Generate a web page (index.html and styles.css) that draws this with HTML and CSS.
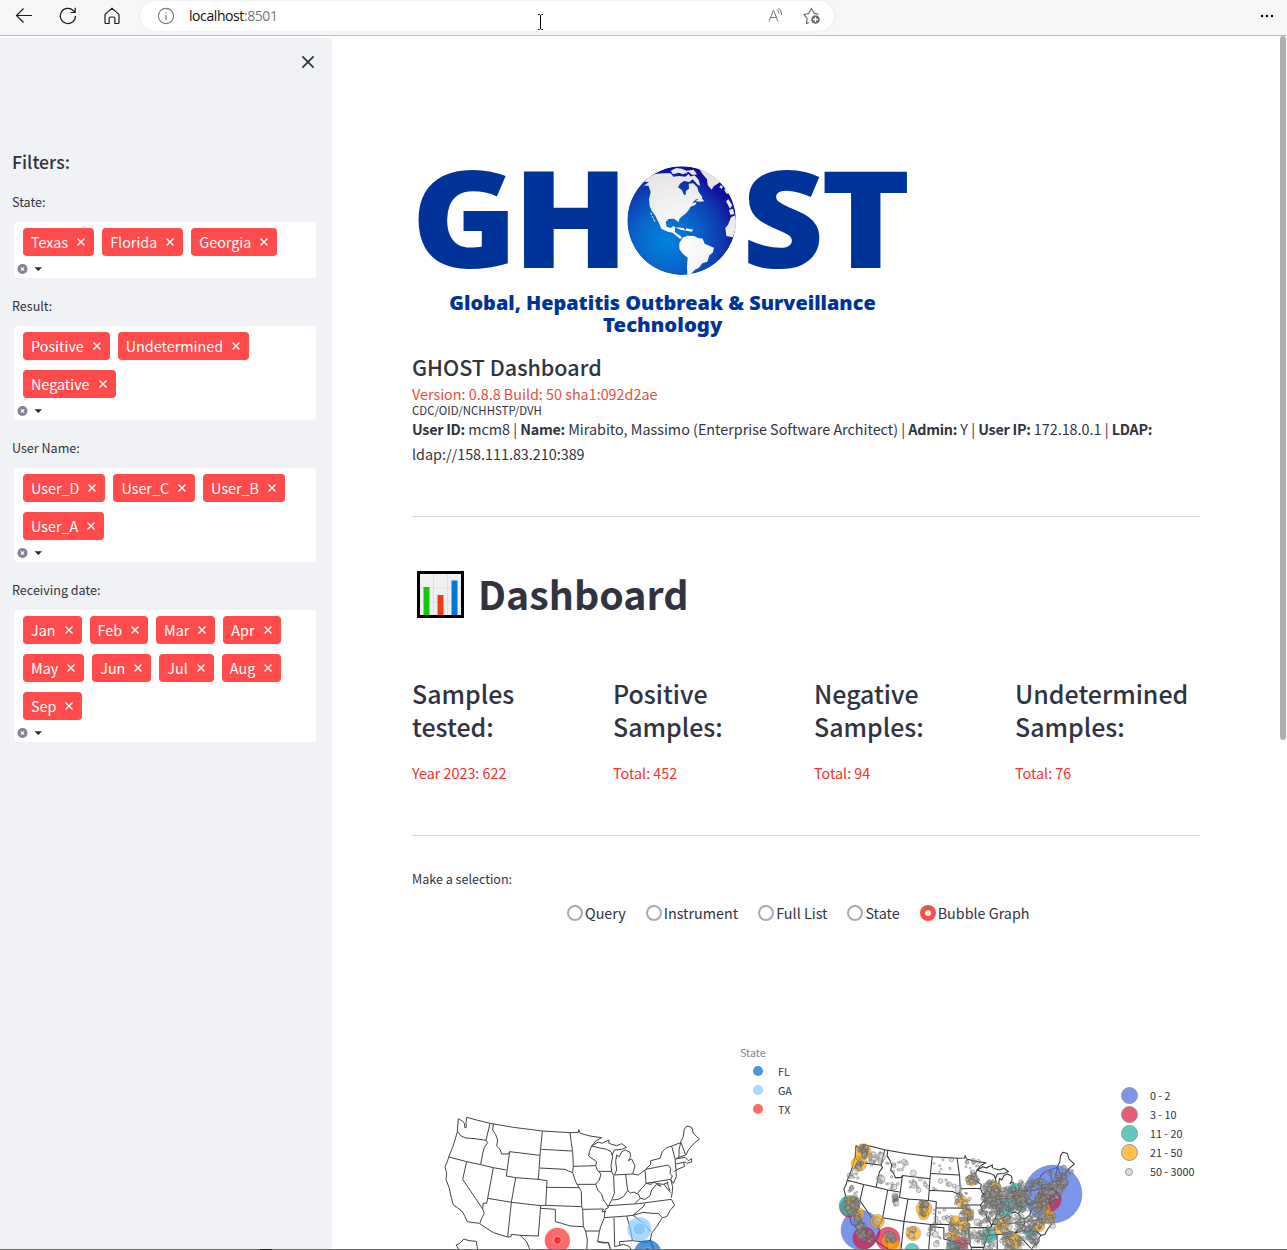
FILE: index.html
```html
<!DOCTYPE html>
<html lang="en">
<head>
<meta charset="utf-8">
<title>GHOST Dashboard</title>
<link rel="stylesheet" href="styles.css">
</head>
<body>
<header class="browser">
  <svg class="nav-icon back" viewBox="0 0 18 18"><path d="M17 8.500H1.500M8.500 1.500l-7 7 7 7"/></svg>
  <svg class="nav-icon reload" viewBox="0 0 18 18"><path d="M16.500 9a7.600 7.600 0 1 1-2.300-5.500L16 5.200M16.200 .8v4.700h-4.700"/></svg>
  <svg class="nav-icon home" viewBox="0 0 18 18"><path d="M2 7.400 9 1.200l7 6.200v8.200a.9.900 0 0 1-.9.900h-3.200v-5a1.500 1.500 0 0 0-1.500-1.500H7.600a1.500 1.500 0 0 0-1.500 1.500v5H2.900a.9.900 0 0 1-.9-.9z"/></svg>
  <div class="address">
    <svg class="info" viewBox="0 0 18 18"><circle cx="9" cy="9" r="7.600"/><path d="M9 8v5M9 5v1.200"/></svg>
    <span class="url">localhost<span class="port">:8501</span></span>
    <svg class="read" viewBox="0 0 16 16"><path d="M1 14.500 5.500 3 10 14.500M2.500 10.500h6M9 2.500q2 1.500 2 4M10.500 1q3.500 2.500 3 7"/></svg>
    <svg class="star" viewBox="0 0 18 18"><path d="M6 15.500l-2.500 1 .6-5L1 7.500l4.600-1L8.500 1.500l2.600 4.800 4.700.9"/><circle class="disc" cx="12.500" cy="12.500" r="4.300"/><path class="plus" d="M12.500 10v5M10 12.500h5"/></svg>
    <svg class="cursor" viewBox="0 0 7 16"><path d="M1 .5h1.500l1 1 1-1H6M3.500 1v14M1 15.500h1.500l1-1 1 1H6"/></svg>
  </div>
  <svg class="more" viewBox="0 0 14 4"><circle cx="2" cy="2" r="1.200"/><circle cx="7" cy="2" r="1.200"/><circle cx="12" cy="2" r="1.200"/></svg>
</header>

<svg class="defs" aria-hidden="true">
  <symbol id="x" viewBox="0 0 10 10"><path d="M1.500 1.500l7 7M8.500 1.500l-7 7"/></symbol>
  <symbol id="controls" viewBox="0 0 30 12"><circle cx="5.500" cy="6" r="5" fill="#808495"/><path d="M3.900 4.400l3.200 3.200M7.100 4.400 3.900 7.600" stroke="#fff" stroke-width="1.200"/><path d="M17.500 4.200h7.500L21.250 8z" fill="#262730"/></symbol>
</svg>

<div class="page">
  <aside class="sidebar">
    <svg class="close"><use href="#x"/></svg>
    <h2 class="filters-title">Filters:</h2>
    <section class="filter"><p class="label">State:</p>
      <div class="select"><div class="tags"><span class="tag">Texas<svg><use href="#x"/></svg></span><span class="tag">Florida<svg><use href="#x"/></svg></span><span class="tag">Georgia<svg><use href="#x"/></svg></span></div><svg class="controls"><use href="#controls"/></svg></div></section>
    <section class="filter"><p class="label">Result:</p>
      <div class="select"><div class="tags"><span class="tag">Positive<svg><use href="#x"/></svg></span><span class="tag">Undetermined<svg><use href="#x"/></svg></span><span class="tag">Negative<svg><use href="#x"/></svg></span></div><svg class="controls"><use href="#controls"/></svg></div></section>
    <section class="filter"><p class="label">User Name:</p>
      <div class="select"><div class="tags"><span class="tag">User_D<svg><use href="#x"/></svg></span><span class="tag">User_C<svg><use href="#x"/></svg></span><span class="tag">User_B<svg><use href="#x"/></svg></span><span class="tag">User_A<svg><use href="#x"/></svg></span></div><svg class="controls"><use href="#controls"/></svg></div></section>
    <section class="filter"><p class="label">Receiving date:</p>
      <div class="select"><div class="tags"><span class="tag">Jan<svg><use href="#x"/></svg></span><span class="tag">Feb<svg><use href="#x"/></svg></span><span class="tag">Mar<svg><use href="#x"/></svg></span><span class="tag">Apr<svg><use href="#x"/></svg></span><span class="tag">May<svg><use href="#x"/></svg></span><span class="tag">Jun<svg><use href="#x"/></svg></span><span class="tag">Jul<svg><use href="#x"/></svg></span><span class="tag">Aug<svg><use href="#x"/></svg></span><span class="tag">Sep<svg><use href="#x"/></svg></span></div><svg class="controls"><use href="#controls"/></svg></div></section>
  </aside>

  <main class="main">
    <svg class="logo" viewBox="36 0 1500 600">
      <defs><radialGradient id="sea" gradientUnits="userSpaceOnUse" cx="800" cy="270" r="215"><stop offset="0" stop-color="#0084dc"/><stop offset=".45" stop-color="#0a62c8"/><stop offset=".8" stop-color="#0d36ac"/><stop offset="1" stop-color="#10109c"/></radialGradient>
      <radialGradient id="land" gradientUnits="userSpaceOnUse" cx="840" cy="280" r="230"><stop offset="0" stop-color="#fff"/><stop offset="1" stop-color="#e4e4e6"/></radialGradient>
      <clipPath id="disc"><circle cx="845" cy="212" r="163"/></clipPath></defs>
      <g class="wordmark"><text x="34" y="354" textLength="319" lengthAdjust="spacingAndGlyphs">G</text><text x="337" y="354" textLength="351" lengthAdjust="spacingAndGlyphs">H</text><text x="1026" y="354" textLength="246" lengthAdjust="spacingAndGlyphs">S</text><text x="1262" y="354" textLength="270" lengthAdjust="spacingAndGlyphs">T</text></g>
      <g clip-path="url(#disc)">
        <circle cx="845" cy="212" r="163" fill="url(#sea)"/>
        <path fill="url(#land)" d="M712 128 735 104 747 96 733 95 745 82 765 72 790 70 812 70 820 80 838 78 856 80 866 72 878 88 868 96 852 93 840 101 834 112 846 121 852 135 857 134 858 123 867 116 866 101 880 100 892 112 896 126 907 141 904 150 888 148 877 159 890 157 886 165 872 170 866 180 858 190 846 199 838 207 836 216 822 206 806 207 797 216 800 230 812 234 820 228 826 232 824 246 834 252 846 262 841 267 829 258 818 248 803 245 784 236 777 220 766 197 756 184 749 168 747 148 752 126 746 108 733 106z"/>
        <path fill="url(#land)" d="M838 279 848 263 862 257 882 258 894 264 908 266 914 281 942 293 938 308 928 316 922 335 907 340 897 353 884 360 873 372 862 376 861 349 863 323 849 312 838 297z"/>
        <path fill="url(#land)" d="M900 60 920 55 944 74 961 96 953 101 941 109 935 119 923 105 921 88 908 73z"/>
        <path fill="url(#land)" d="M812 62l17-8 17 2 13 6 22-3 10 14-14 2-12-10-16 8-12-5-18 5zM870 80l14-4 12 14 5 18-10-5-10-13zM962 105l7 5-4 7-7-5zM976 113l10 14-5 6-8-12zM985 148l12 18-7 10-12-22zM987 180l12-4 4 17-12 1zM993 202l13-6 4 28-11 38-20-4-3-24 8-10z"/>
        <path fill="url(#land)" d="M826 232l24 2 8 8-17-3zM858 235l22 4-5 6-17-3zM885 153l20-8 8 9-13 1z"/>
        <path d="M752 188l14 30M826 63l35 7M862 76l34 24" stroke="#eee" stroke-width="3" fill="none" stroke-dasharray="8 3"/>
      </g>
      <g class="tagline"><text x="148" y="480" textLength="1279" lengthAdjust="spacingAndGlyphs">Global, Hepatitis Outbreak &amp; Surveillance</text><text x="609" y="547" textLength="358" lengthAdjust="spacingAndGlyphs">Technology</text></g>
    </svg>
    <h2 class="app-name">GHOST Dashboard</h2>
    <p class="version">Version: 0.8.8 Build: 50 sha1:092d2ae</p>
    <p class="org">CDC/OID/NCHHSTP/DVH</p>
    <p class="user"><b>User ID:</b> mcm8 | <b>Name:</b> Mirabito, Massimo (Enterprise Software Architect) | <b>Admin:</b> Y | <b>User IP:</b> 172.18.0.1 | <b>LDAP:</b><br>ldap://158.111.83.210:389</p>
    <hr class="rule">
    <h1 class="title"><svg viewBox="0 0 47 47"><path d="M1.500 1.500h44v44h-44z" fill="#f0f0f1" stroke="#000" stroke-width="3"/><path d="M16.500 3v41M30.500 3v41M3 17h41M3 31h41" stroke="#dedee0"/><path d="M6.500 16h6v28h-6z" fill="#16c60c"/><path d="M20.500 24h6v20h-6z" fill="#f03a17"/><path d="M34.500 9.500h6V44h-6z" fill="#0078d7"/></svg><span>Dashboard</span></h1>
    <div class="metrics">
      <div><h3>Samples<br>tested:</h3><p>Year 2023: 622</p></div>
      <div><h3>Positive<br>Samples:</h3><p>Total: 452</p></div>
      <div><h3>Negative<br>Samples:</h3><p>Total: 94</p></div>
      <div><h3>Undetermined<br>Samples:</h3><p>Total: 76</p></div>
    </div>
    <hr class="rule second">
    <p class="label choose">Make a selection:</p>
    <div class="radios"><span><i></i>Query</span><span><i></i>Instrument</span><span><i></i>Full List</span><span><i></i>State</span><span><i class="on"></i>Bubble Graph</span></div>
    <div class="charts">
      <svg class="map-left" viewBox="-54 0 984 630">
        <defs><g id="usa">
          <path d="M82 275 85 236 98 244 103 250 105 264 109 262 108 248 110 232 140 240 180 250 250 262 337 273 420 278 445 277 446 269 451 280 480 288 515 293 497 303 485 318M82 275 75 300 68 322 57 348 52 365 45 380 50 400 48 418 58 445 62 465 70 495 82 503 97 515 105 530 112 545 147 550M83 275 93 288 108 294 135 296 168 301M180 250 168 301 173 308 163 322 158 340 152 374M190 252 188 270 197 284 203 300 200 318 210 328 215 342 235 342 239 335 330 346"/>
          <path d="M57 351 110 365 152 374 190 383 229 390M110 365 98 418 158 507M190 383 173 475 170 490 160 489 158 507 163 520 155 535 149 551 190 578 233 591 243 590 244 583 270 586 325 588 332 497M239 335 229 408 257 413 325 418 351 422 347 496M257 413 244 487 233 590M173 475 245 487 332 497 347 496 454 500M337 273 330 346 325 418M334 328 426 333M329 384 405 388 415 393 428 398M350 442 448 443M420 278 424 310 428 335 430 378 428 398 437 425 441 433 448 443 454 455 455 500 458 508 460 560 467 573 472 600 470 630"/>
          <path d="M430 379 497 377 500 365 476 348 478 335 485 318 510 324 530 328 543 335 548 350 543 375 545 394 506 394M497 377 503 392 513 402 508 420 497 432 503 450 515 462 520 480 530 492 535 503 525 508 523 533 512 560 508 575 503 605 535 608 541 625M441 433 497 433M487 317 505 306 517 310 525 305 537 300 536 309 545 313 560 317 575 311 590 322 575 328 553 330 546 347M553 405 560 390 557 365 560 345 568 350 575 335 586 330 600 337 602 350 595 362 605 357 615 378 608 402 553 405M545 394 551 407 553 460 545 480 535 500M587 404 593 452M548 480 565 478 580 470 593 452 602 459 612 456 622 462 630 450 640 440 648 430 645 390 625 405 608 402M645 390 647 388 662 373 662 362 690 355 697 335 710 323 725 318 735 355 738 390 733 395M647 388 715 375 722 385 720 400 727 408 722 418 648 430M725 318 752 308 747 330 747 352 737 357 765 352 775 362 785 356 785 366 770 370 765 366 738 372M752 305 767 345 747 352M752 305 760 290 762 270 770 258 785 262 790 280 808 297 790 312 775 330 768 345M760 366 764 379 738 390 739 410 730 430 722 418M722 418 728 440 727 455 724 473M712 425 715 440 720 452"/>
          <path d="M648 430 663 433 670 427 684 431 693 439 679 433 665 450 660 467 645 478 631 475 625 462M684 431 700 433 715 427M702 433 712 446 722 458M631 475 615 490M535 497 625 491 724 478 734 495 720 512 710 530 697 533 680 560 665 580 661 600M523 533 590 528 609 526 640 500 645 491M609 526 640 517 665 520 685 520 697 533M332 505 376 508 376 545 395 550 420 558 460 560M458 508 520 507 516 515 528 515M467 573 508 573M552 533 554 620M590 528 602 570 607 602 568 605 570 617M610 526 640 550 663 575M607 602 650 607 661 600 672 630M503 605 520 609 535 608 541 627M554 620 580 613 597 619 604 629M270 586 290 605 300 630M78 615 88 611 102 597 117 602 139 604 143 630M78 615 88 630"/>
        </g></defs>
        <use href="#usa" class="outline"/>
        <circle cx="382" cy="601" r="38" fill="#ff2b2b" fill-opacity=".7"/><circle cx="382" cy="601" r="12" fill="#ff2b2b" stroke="#ffaaa9" stroke-width="3"/>
        <circle cx="628" cy="567" r="36" fill="#83c9ff" fill-opacity=".7"/><circle cx="628" cy="567" r="19" fill="#83c9ff" stroke="#c6e6ff" stroke-width="3"/>
        <circle cx="653" cy="640" r="41" fill="#0068c9" fill-opacity=".7"/><circle cx="653" cy="640" r="17" fill="#0068c9" stroke="#83b8ea" stroke-width="3"/>
      </svg>
      <ul class="legend states"><li class="head">State</li><li><i class="fl"></i>FL</li><li><i class="ga"></i>GA</li><li><i class="tx"></i>TX</li></ul>
      <svg class="map-right" viewBox="0 -120 810 630"><use href="#usa" class="outline dark" transform="translate(1 -17) scale(.906)"/><g id="bubbles"></g></svg>
      <ul class="legend sizes"><li><i class="b1"></i>0 - 2</li><li><i class="b2"></i>3 - 10</li><li><i class="b3"></i>11 - 20</li><li><i class="b4"></i>21 - 50</li><li><i class="b5"></i>50 - 3000</li></ul>
    </div>
  </main>
  <div class="scrollbar"></div>
</div>
<footer class="edge"><span></span></footer>
<script src="bubbles.js"></script>
</body>
</html>
```
FILE: styles.css
```css
* { box-sizing: border-box; }
html, body, h1, h2, h3, p, ul { margin: 0; padding: 0; }
body { display: flex; flex-direction: column; height: 1250px; overflow: hidden; background: #fff; color: #31333f; font-family: "Noto Sans CJK SC", "Noto Sans", sans-serif; font-size: 14.35px; }
svg { display: block; flex: none; }
.defs { position: absolute; width: 0; height: 0; }

.browser { display: flex; align-items: flex-start; height: 36px; flex: none; background: #f7f7f7; border-bottom: 1px solid #bababa; padding-left: 15px; }
.nav-icon { width: 18px; height: 18px; margin: 7px 26px 0 0; fill: none; stroke: #1b1b1b; stroke-width: 1.2; }
.address { position: relative; display: flex; width: 694px; height: 30px; margin: 1px 0 0 -7px; border-radius: 15px; background: #fff; box-shadow: 0 0 3px #e4e4e4; }
.info { width: 18px; height: 18px; margin: 6px 14px 0 17px; fill: none; stroke: #777; stroke-width: 1.1; }
.url { flex: 1; font: 14px/30px "Open Sans", sans-serif; letter-spacing: -.42px; color: #111; }
.port { color: #777; }
.read { width: 16px; height: 16px; margin: 6px 19px 0 0; fill: none; stroke: #777; }
.star { width: 18px; height: 18px; margin: 6px 13px 0 0; fill: none; stroke: #666; stroke-width: 1.1; }
.star .disc { fill: #6a6a6a; stroke: none; }
.star .plus { stroke: #fff; stroke-width: 1.3; }
.cursor { position: absolute; left: 397px; top: 13px; width: 7px; height: 16px; fill: none; stroke: #000; }
.more { width: 14px; height: 4px; margin: 14px 13px 0 auto; }

.page { display: flex; flex: 1; min-height: 0; }
.sidebar { width: 332px; flex: none; margin-top: 2px; background: #f0f2f6; padding-left: 12px; }
.close { width: 16px; height: 16px; margin: 16px 0 0 288px; stroke: #31333f; stroke-width: 1.1; }
.filters-title { margin: 77px 0 15px; height: 28px; font-size: 17.7px; line-height: 28px; font-weight: 500; }
.filter { margin-bottom: 16px; }
.label { height: 24px; margin-bottom: 8px; font-size: 12.55px; line-height: 24px; }
.select { width: 302px; margin-left: 2px; padding: 6px 0 3px; border-radius: 4px; background: #fff; }
.tags { display: flex; flex-wrap: wrap; gap: 10px 8px; padding-left: 9px; }
.tag { display: flex; align-items: center; height: 28px; padding: 0 8px; border-radius: 4px; background: #ff4b4b; color: #fff; line-height: 28px; }
.tag svg { width: 10px; height: 10px; margin-left: 8px; stroke: #fff; stroke-width: 1.4; }
.controls { width: 30px; height: 12px; margin: 7px 0 0 3px; }

.main { flex: 1; padding: 114px 0 0 80px; min-width: 0; }
.logo { width: 500px; height: 200px; overflow: visible; }
.logo text { font-family: "Noto Sans", "Open Sans", sans-serif; font-weight: 900; fill: #003399; }
.wordmark text { font-size: 406px; }
.tagline text { font-size: 60px; }
.app-name { margin-top: 3px; height: 31px; font-size: 21.5px; line-height: 28px; font-weight: 500; }
.version { height: 19px; line-height: 19px; color: #e74c3c; }
.org { height: 13px; font-size: 11.45px; line-height: 14px; }
.user { line-height: 25px; white-space: nowrap; }
.user b { font-weight: 700; letter-spacing: -.28px; }
.rule { width: 788px; height: 1px; margin: 50px 0 0; border: 0; background: #d6d6d9; }
.rule.second { margin-top: 48px; }
.title { display: flex; align-items: center; gap: 14px; margin-top: 51px; height: 52px; padding-left: 5px; font-size: 39.3px; line-height: 52px; font-weight: 700; }
.title svg { width: 47px; height: 47px; }
.title span { margin-top: -2px; }
.metrics { display: grid; grid-template-columns: repeat(4, 185px); column-gap: 16px; margin-top: 57px; height: 110px; }
.metrics h3 { font-size: 24.95px; line-height: 33px; font-weight: 500; }
.metrics p { margin-top: 17px; line-height: 25px; color: #ff2b2b; }
.choose { margin-top: 31px; }
.radios { display: flex; gap: 20px; margin: 10px 0 0 155px; height: 24px; line-height: 24px; }
.radios span { display: flex; align-items: center; gap: 2px; }
.radios i { width: 16px; height: 16px; border: 2px solid #a9aab0; border-radius: 50%; }
.radios .on { border: 5px solid #ff4b4b; }

.charts { display: flex; align-items: flex-start; height: 210px; margin-top: 115px; }
.map-left { width: 328px; height: 210px; }
.outline { fill: none; stroke: #444; stroke-width: 3; stroke-linejoin: round; }
.outline.dark { stroke: #333; stroke-width: 3.4; }
.map-right { width: 270px; height: 210px; margin-left: 18px; }
.legend { list-style: none; font-size: 10.75px; line-height: 19px; }
.legend li { display: flex; align-items: center; height: 19px; }
.legend i { border-radius: 50%; flex: none; }
.states { width: 72px; padding-top: 3px; }
.states .head { color: #808495; }
.states i { width: 10px; height: 10px; margin: -1px 15px 0 13px; }
.fl { background: #4c95d9; }
.ga { background: #a8d9ff; }
.tx { background: #ff6b6b; }
.sizes { margin: 46px 0 0 21px; }
.sizes i { width: 17px; height: 17px; margin-right: 12px; border: 1px solid #999; }
.b1 { background: #7b96ea; }
.b2 { background: #e75b77; }
.b3 { background: #62c9c1; }
.b4 { background: #ffc04d; }
.sizes .b5 { width: 8px; height: 8px; margin: 0 17px 0 4px; background: #ddd; }

.scrollbar { flex: none; width: 6px; height: 704px; margin: 0 1px 0 0; border-radius: 3px; background: #adadb2; }
.edge { flex: none; height: 1px; background: #707070; padding-left: 260px; }
.edge span { display: block; width: 12px; height: 1px; background: #222; }
```
FILE: bubbles.js
```js
// Draws the population bubbles, largest groups first.
const layer = document.getElementById('bubbles');
function bubble(x, y, r, fill, opacity, edge = .6) {
  const c = document.createElementNS('http://www.w3.org/2000/svg', 'circle');
  c.setAttribute('cx', x); c.setAttribute('cy', y); c.setAttribute('r', r);
  c.setAttribute('fill', fill); c.setAttribute('fill-opacity', opacity);
  c.setAttribute('stroke', '#555'); c.setAttribute('stroke-opacity', edge); c.setAttribute('stroke-width', 1.8);
  layer.appendChild(c);
}
const groups = [
  ['#4169e1', .7, [[669, 342, 87], [92, 450, 59]]],
  ['#dc143c', .7, [[657, 357, 37], [102, 474, 34], [58, 383, 29], [174, 477, 36], [390, 494, 24]]],
  ['#20b2aa', .7, [[58, 377, 31], [556, 335, 25], [525, 382, 27], [572, 380, 16], [478, 467, 23], [603, 456, 20], [246, 512, 22], [368, 504, 20]]],
  ['#ffa500', .7, [[100, 215, 24], [87, 251, 23], [68, 371, 22], [83, 402, 20], [142, 424, 21], [282, 386, 24], [281, 404, 16], [250, 460, 22], [177, 482, 22], [192, 496, 20], [425, 300, 17], [395, 365, 18], [414, 402, 18], [376, 424, 17], [372, 463, 18], [403, 439, 18], [493, 325, 21], [521, 432, 19], [509, 446, 17], [550, 483, 25], [572, 345, 16], [656, 412, 20], [635, 372, 21], [650, 387, 12], [627, 437, 18]]]
];
groups.forEach(([fill, opacity, items]) => items.forEach(([x, y, r]) => bubble(x, y, r, fill, opacity, .4)));
let seed = 2023;
function rnd() { seed = (seed * 16807) % 2147483647; return seed / 2147483647; }
// cx, cy, spread x, spread y, tilt, count
const clusters = [
  [100, 213, 15, 18, 0, 30], [86, 250, 13, 15, 0, 18], [125, 238, 22, 20, 0, 12], [153, 232, 10, 15, 0, 7],
  [70, 295, 18, 16, 0, 8], [152, 298, 13, 13, 0, 6], [66, 372, 22, 26, 0, 46], [85, 420, 15, 30, .3, 45],
  [103, 462, 22, 26, .3, 55], [68, 335, 14, 14, 0, 7], [180, 474, 15, 17, 0, 28], [196, 357, 6, 17, 0, 22],
  [280, 385, 12, 26, 0, 32], [210, 258, 50, 26, 0, 11], [190, 310, 26, 20, 0, 7], [262, 320, 34, 24, 0, 11],
  [338, 255, 34, 26, 0, 7], [345, 315, 42, 22, 0, 7], [330, 405, 30, 24, 0, 8], [315, 460, 22, 34, 0, 15],
  [252, 454, 25, 20, 0, 7], [430, 262, 35, 26, 0, 13], [425, 300, 20, 16, 0, 26],
  [398, 360, 24, 26, 0, 20], [410, 402, 20, 26, 0, 32], [375, 425, 20, 22, 0, 15], [380, 470, 32, 36, 0, 50],
  [430, 450, 32, 42, 0, 42], [485, 340, 28, 42, 0, 125], [485, 390, 36, 38, 0, 115], [540, 355, 42, 38, 0, 140],
  [580, 358, 32, 34, 0, 90], [610, 315, 45, 16, -.15, 55], [655, 345, 34, 40, -.4, 140], [691, 305, 18, 26, -.2, 70],
  [687, 274, 40, 14, -.4, 12], [630, 380, 22, 26, 0, 42], [535, 430, 52, 32, 0, 68], [605, 432, 34, 28, -.5, 66],
  [655, 415, 20, 22, -.2, 16], [550, 485, 36, 28, 0, 62], [478, 470, 28, 34, 0, 34], [605, 465, 22, 20, 0, 26], [383, 502, 26, 10, 0, 26], [615, 488, 12, 12, 0, 16]
];
clusters.forEach(([cx, cy, sx, sy, tilt, n]) => {
  for (let i = 0; i < n; i++) {
    const a = rnd() * Math.PI * 2, d = Math.sqrt(rnd()), dx = Math.cos(a) * d * sx, dy = Math.sin(a) * d * sy;
    bubble((cx + dx + dy * tilt).toFixed(1), (cy + dy).toFixed(1), (2.5 + rnd() * rnd() * 8).toFixed(1), '#a8a8a8', .38, .65);
  }
});
[[153, 231, 13], [222, 246, 8], [250, 279, 9], [192, 321, 9], [386, 327, 11], [319, 492, 9], [668, 437, 9], [75, 273, 9], [141, 424, 13], [245, 466, 9], [153, 298, 12]].forEach(([x, y, r]) => bubble(x, y, r, '#bbb', .45));
```
